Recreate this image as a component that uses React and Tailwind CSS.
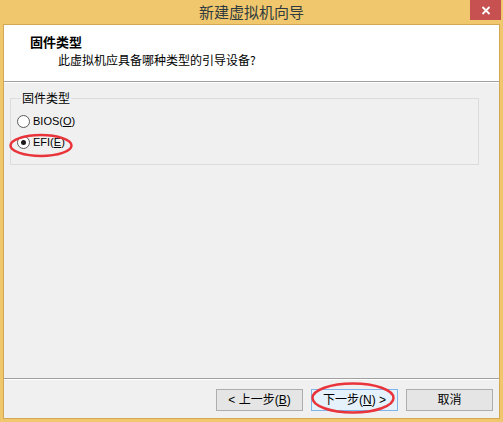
import React from "react";

const cjk = { fontFamily: '"Noto Sans CJK SC", sans-serif' };
const lat = { fontFamily: '"Liberation Sans", "Noto Sans CJK SC", sans-serif' };

function Radio({ checked, children }) {
  return (
    <div className="flex items-center h-[16px]">
      <span className="w-[13px] h-[13px] rounded-full border border-[#5a5a5a] bg-white flex items-center justify-center">
        {checked && <span className="w-[5px] h-[5px] rounded-full bg-[#1a1a1a]" />}
      </span>
      <span className="ml-[3px] text-[11px] leading-[16px] text-black" style={lat}>
        {children}
      </span>
    </div>
  );
}

function Btn({ children, primary }) {
  return (
    <div
      className={
        "w-[87px] h-[22px] border flex items-center justify-center text-[12px] leading-[16px] text-black " +
        (primary ? "border-[#7eb4ea] bg-[#e5f1fb]" : "border-[#adadad] bg-[#e5e5e5]")
      }
      style={lat}
    >
      {children}
    </div>
  );
}

export default function App() {
  return (
    <div className="w-[503px] h-[422px] bg-[#f0c76c] flex flex-col relative overflow-hidden">
      <div className="h-[24px] flex items-start">
        <div className="w-[33px]" />
        <div className="flex-1 text-center text-[15px] leading-[24px] text-[#2f3b3f]" style={cjk}>
          新建虚拟机向导
        </div>
        <div className="w-[31px] h-[20px] bg-[#c75050] flex items-center justify-center mr-[2px]">
          <svg width="10" height="9" viewBox="0 0 10 9">
            <path d="M1.5 1 L8.5 8 M8.5 1 L1.5 8" stroke="white" strokeWidth="1.8" />
          </svg>
        </div>
      </div>
      <div className="flex-1 mx-[3px] mb-[3px] border border-[#d2a855] bg-[#f0f0f0] flex flex-col">
        <div className="h-[57px] bg-white border-b border-[#a0a0a0] pl-[26px] pt-[8px]" style={cjk}>
          <div className="text-[13px] leading-[17px] font-bold text-black">固件类型</div>
          <div className="text-[12px] leading-[16px] text-black mt-[2px] pl-[28px]">此虚拟机应具备哪种类型的引导设备?</div>
        </div>
        <div className="flex-1 border-t border-white pt-[7px] pl-[6px]">
          <fieldset className="w-[469px] border border-[#dcdcdc] pl-[6px] pt-[7px] pb-[14px] flex flex-col gap-[5px]">
            <legend className="ml-[4px] px-[1px] text-[12px] leading-[16px] text-black" style={cjk}>
              固件类型
            </legend>
            <Radio>
              BIOS(<span className="underline">O</span>)
            </Radio>
            <Radio checked>
              EFI(<span className="underline">E</span>)
            </Radio>
          </fieldset>
        </div>
        <div className="h-[40px] border-t border-[#a0a0a0]">
          <div className="h-full border-t border-white pt-[9px] pr-[6px] flex justify-end gap-[8px]">
            <Btn>
              &lt; 上一步(<span className="underline">B</span>)
            </Btn>
            <Btn primary>
              下一步(<span className="underline">N</span>) &gt;
            </Btn>
            <Btn>取消</Btn>
          </div>
        </div>
      </div>
      <svg className="absolute left-0 top-0 pointer-events-none" width="503" height="422">
        <ellipse cx="41" cy="145.5" rx="30.5" ry="10.5" fill="none" stroke="#e8343a" strokeWidth="2.5" />
        <ellipse cx="353" cy="398" rx="40.5" ry="14.5" fill="none" stroke="#e8343a" strokeWidth="2.5" />
      </svg>
    </div>
  );
}
